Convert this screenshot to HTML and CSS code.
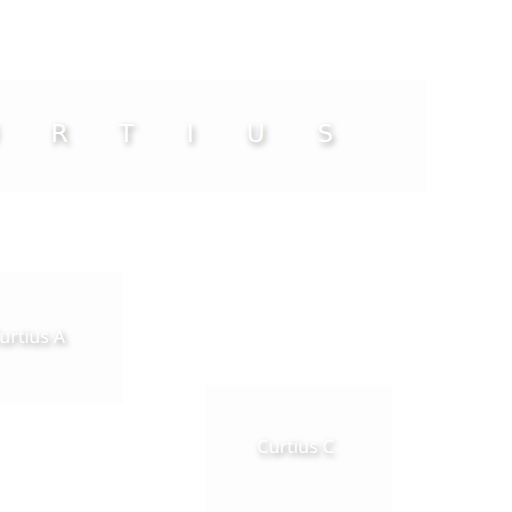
FILE: index.html
```html
<!DOCTYPE html>
<html>
<head>
<meta charset="utf-8">
<link rel="stylesheet" href="styles.css">
</head>
<body>
<div class="canvas">
  <div class="title-box"><h1 class="title">CURTIUS</h1></div>
  <div class="card card-a"><span class="label">Curtius A</span></div>
  <div class="card card-c"><span class="label">Curtius C</span></div>
</div>
</body>
</html>
```
FILE: styles.css
```css
html, body {
  margin: 0;
  padding: 0;
  background: #ffffff;
  overflow: hidden;
  width: 512px;
  height: 512px;
}
.canvas {
  display: flex;
  flex-direction: column;
  align-items: flex-start;
  padding-top: 80px;
}
.title-box {
  margin-left: -60px;
  width: 487px;
  height: 112px;
  box-sizing: border-box;
  padding-bottom: 6px;
  background: #fdfdfd;
  display: flex;
  align-items: center;
  justify-content: flex-start;
}
.title {
  margin: 0 0 0 -30px;
  font-family: "DejaVu Sans", sans-serif;
  font-weight: normal;
  font-size: 25px;
  letter-spacing: 52.5px;
  color: #ffffff;
  text-shadow: 2px 3px 6px rgba(0,0,0,0.4);
}
.card {
  width: 187px;
  height: 133px;
  box-sizing: border-box;
  padding-bottom: 6px;
  padding-right: 6px;
  background: #fdfdfd;
  display: flex;
  align-items: center;
  justify-content: center;
}
.card-a {
  margin-top: 80px;
  margin-left: -64px;
}
.card-c {
  margin-top: -20px;
  margin-left: 205px;
  padding-bottom: 12px;
}
.label {
  font-family: "Noto Sans", sans-serif;
  font-size: 18px;
  color: #ffffff;
  text-shadow: 2px 3px 6px rgba(0,0,0,0.4);
}
```
